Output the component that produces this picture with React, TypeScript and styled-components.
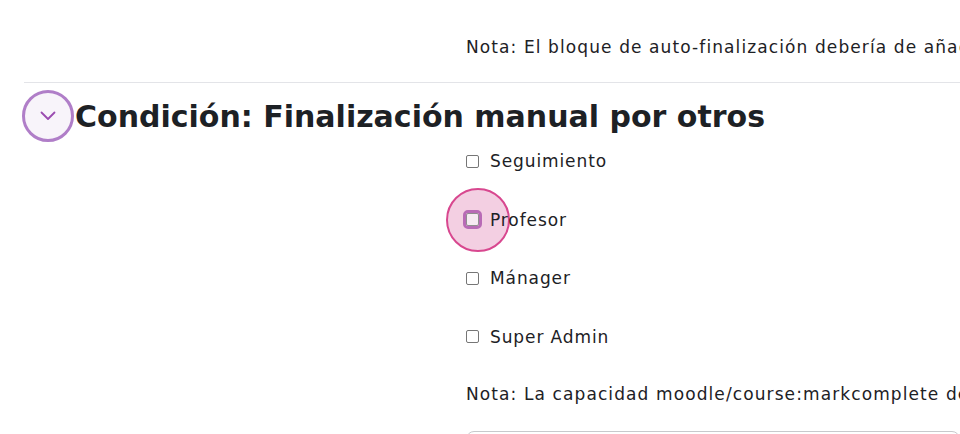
import styled, { createGlobalStyle } from 'styled-components';

const GlobalStyle = createGlobalStyle`
  body {
    margin: 0;
    background: #fff;
    font-family: "DejaVu Sans", "Open Sans", sans-serif;
    color: #1d2125;
    overflow: hidden;
  }
`;

const Page = styled.div`
  width: 960px;
  height: 434px;
  padding-left: 22px;
  box-sizing: border-box;
  overflow: hidden;
`;

const Note = styled.div<{ top: number }>`
  margin-left: 444px;
  padding-top: ${(p) => p.top}px;
  font-size: 17px;
  letter-spacing: 1.1px;
  line-height: 22px;
  white-space: nowrap;
`;

const Divider = styled.hr`
  margin: 24px 0 0 2px;
  border: 0;
  border-top: 1px solid #e3e4e8;
`;

const Header = styled.div`
  display: flex;
  align-items: center;
  gap: 1px;
  margin-top: 7px;
`;

const Toggle = styled.button`
  width: 52px;
  height: 52px;
  border-radius: 50%;
  border: 3px solid #b07ec8;
  background: #f8f4fa;
  display: flex;
  align-items: center;
  justify-content: center;
  padding: 0;
  box-sizing: border-box;
  color: #9a4bb0;
`;

const Title = styled.h3`
  margin: 0;
  font-size: 30px;
  font-weight: 700;
  white-space: nowrap;
`;

const Options = styled.div`
  margin-left: 444px;
  display: flex;
  flex-direction: column;
  gap: 36.5px;
  margin-top: 8px;
`;

const Option = styled.label`
  position: relative;
  display: flex;
  align-items: center;
  gap: 11px;
  height: 22px;
  font-size: 17px;
  letter-spacing: 0.9px;
  white-space: nowrap;
`;

const Box = styled.span<{ focused?: boolean }>`
  position: relative;
  width: 13px;
  height: 13px;
  box-sizing: border-box;
  border: 1px solid #767676;
  border-radius: 2px;
  background: #fff;
  flex: none;
  ${(p) =>
    p.focused &&
    `
    outline: 3px solid #b86bb6;
    border-color: #8f8f8f;
    background: #f6eaf2;
  `}
`;

const FocusRing = styled.span`
  position: absolute;
  left: -20px;
  top: -21px;
  width: 64px;
  height: 64px;
  border-radius: 50%;
  background: #f3cfe2;
  border: 2px solid #d8478f;
  box-sizing: border-box;
  z-index: -1;
`;

const Text = styled.span`
  position: relative;
`;

const InputEdge = styled.div`
  margin: 26px 0 0 444px;
  height: 20px;
  border: 1px solid #c8c9cc;
  border-radius: 8px;
`;

const roles = ['Seguimiento', 'Profesor', 'Mánager', 'Super Admin'];

export default function App() {
  return (
    <Page>
      <GlobalStyle />
      <Note top={36}>
        Nota: El bloque de auto-finalización debería de añadirse a la página del curso.
      </Note>
      <Divider />
      <Header>
        <Toggle aria-label="Colapsar">
          <svg width="16" height="10" viewBox="0 0 16 10" fill="none">
            <path d="M1.5 1.5 L8 8 L14.5 1.5" stroke="currentColor" strokeWidth="1.8" strokeLinecap="round" strokeLinejoin="round" />
          </svg>
        </Toggle>
        <Title>Condición: Finalización manual por otros</Title>
      </Header>
      <Options>
        {roles.map((r) => (
          <Option key={r}>
            {r === 'Profesor' && <FocusRing />}
            <Box focused={r === 'Profesor'} />
            <Text>{r}</Text>
          </Option>
        ))}
      </Options>
      <Note top={35}>
        Nota: La capacidad moodle/course:markcomplete debe estar asignada a estos roles.
      </Note>
      <InputEdge />
    </Page>
  );
}
